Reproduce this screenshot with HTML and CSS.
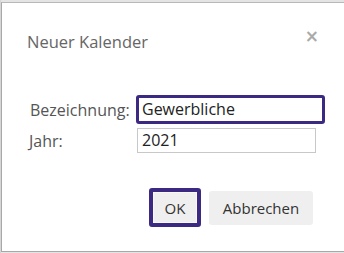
FILE: index.html
```html
<!DOCTYPE html>
<html lang="de">
<head>
<meta charset="utf-8">
<link rel="stylesheet" href="styles.css">
</head>
<body>
<div class="dialog">
  <div class="header">
    <span class="title">Neuer Kalender</span>
    <span class="close">&times;</span>
  </div>
  <div class="form">
    <label class="label">Bezeichnung:</label>
    <div class="input input-focus">Gewerbliche</div>
    <label class="label label-jahr">Jahr:</label>
    <div class="input input-plain">2021</div>
  </div>
  <div class="footer">
    <button class="btn btn-ok">OK</button>
    <button class="btn btn-cancel">Abbrechen</button>
  </div>
</div>
</body>
</html>
```
FILE: styles.css
```css
html, body {
  margin: 0;
  padding: 0;
}
body {
  width: 344px;
  height: 253px;
  overflow: hidden;
  background: linear-gradient(to right, #d6d6d6 0 1px, #e4e4e4 1px) ;
  font-family: "Open Sans", "Noto Sans", sans-serif;
  padding-top: 2px;
  padding-left: 1px;
  box-sizing: border-box;
}
.dialog {
  background: #fff;
  border-left: 1px solid #a8a8a8;
  border-top: 1px solid #b8b8b8;
  border-bottom: 1px solid #a8a8a8;
  height: 250px;
  box-sizing: border-box;
  display: flex;
  flex-direction: column;
}
.header {
  display: flex;
  justify-content: space-between;
  align-items: flex-start;
  padding: 28px 26px 0 25px;
  height: 22px;
}
.title {
  font-size: 16.5px;
  line-height: 22px;
  color: #666;
}
.close {
  font-family: "DejaVu Sans", sans-serif;
  font-weight: bold;
  font-size: 17px;
  line-height: 20px;
  color: #aaa;
  margin-top: -5px;
  margin-right: -1px;
}
.form {
  display: grid;
  grid-template-columns: 106px auto;
  row-gap: 4px;
  align-items: center;
  padding-left: 28px;
  margin-top: 42px;
}
.label {
  font-size: 16px;
  color: #555;
}
.label-jahr {
  margin-left: -1px;
}
.input {
  font-size: 16px;
  color: #222;
  box-sizing: border-box;
  padding-left: 5px;
}
.input-focus {
  width: 189px;
  height: 29px;
  line-height: 23px;
  border: 3px solid #3c2a82;
  border-radius: 3px;
  padding-left: 3px;
}
.input-plain {
  width: 179px;
  height: 25px;
  line-height: 23px;
  border: 1px solid #c8c8c8;
  margin-left: 1px;
  padding-left: 4px;
}
.footer {
  display: flex;
  justify-content: flex-end;
  align-items: center;
  gap: 8px;
  padding-right: 31px;
  margin-top: 35px;
}
.btn {
  font-family: "Open Sans", "Noto Sans", sans-serif;
  font-size: 15px;
  color: #333;
  background: #efefef;
  border: none;
  border-radius: 3px;
  box-sizing: border-box;
  padding: 0;
}
.btn-ok {
  width: 52px;
  height: 39px;
  border: 4px solid #3c2a82;
  border-radius: 3px;
  box-shadow: inset 0 0 0 1px #f8f8f8;
}
.btn-cancel {
  width: 104px;
  height: 34px;
}
```
